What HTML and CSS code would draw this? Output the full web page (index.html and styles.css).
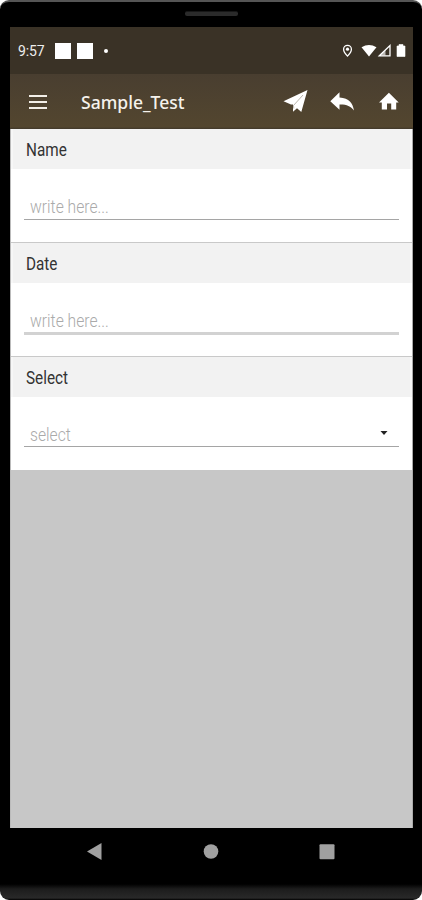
FILE: index.html
```html
<!DOCTYPE html>
<html lang="en">
<head>
<meta charset="utf-8">
<title>Sample_Test</title>
<link rel="stylesheet" href="styles.css">
</head>
<body>
<div class="phone">
  <div class="speaker"></div>
  <main class="screen">
    <header class="header">
      <div class="status">
        <span class="clock">9:57</span>
        <i class="note"></i><i class="note"></i><i class="dot"></i>
        <svg class="signals" width="66" height="16" viewBox="0 0 66 16">
          <path d="M5.500 2.300a3.900 3.900 0 0 0-3.900 3.900c0 2.900 3.900 6.900 3.900 6.900s3.900-4 3.900-6.900a3.900 3.900 0 0 0-3.900-3.900z" fill="none" stroke="#fff" stroke-width="1.300"/>
          <circle cx="5.500" cy="6.200" r="1.600" fill="#fff"/>
          <path d="M19.500 4.300Q27 -.2 34.500 4.300L27 13.500z" fill="#fff"/>
          <path d="M37.300 12.800L48 2.500V12.800z" fill="none" stroke="#fff" stroke-width="1.300"/>
          <path d="M43.500 7V12.500h-6z" fill="#fff" opacity=".65"/>
          <path d="M55 3h2V1.500h4V3h2V13.500h-8z" fill="#fff" stroke="#fff" stroke-width=".6" stroke-linejoin="round"/>
        </svg>
      </div>
      <div class="toolbar">
        <div class="menu"><i></i><i></i><i></i></div>
        <h1><span class="title">Sample_Test</span></h1>
        <svg class="actions" width="118" height="26" viewBox="0 0 118 26" fill="#fff">
          <path d="M24.500 1L.5 12.300l7.500 3.200 2 0V22.800l4-3.600 4.300 3.800z"/>
          <path d="M20 6L10.500 16.500l.3 3" fill="none" stroke="#8a8173" stroke-width=".6"/>
          <path d="M47.300 12.200L56.500 3.300v5.200C66.500 9.300 69.500 13.800 71 21.600c-3.500-4.500-7.500-6.200-14.500-6v5.200z"/>
          <path d="M96 13.500l9.900-9.700 9.800 9.700h-2.500V20.500h-5V14.500H104v6h-5.200v-7z"/>
        </svg>
      </div>
    </header>
    <section class="group">
      <h2><span>Name</span></h2>
      <div class="field"><span class="hint">write here...</span></div>
    </section>
    <section class="group">
      <h2><span>Date</span></h2>
      <div class="field wide"><span class="hint">write here...</span></div>
    </section>
    <section class="group">
      <h2><span>Select</span></h2>
      <div class="field select"><span class="hint">select</span>
        <svg class="caret" width="8" height="6" viewBox="0 0 8 6"><path d="M.5 1h7L4 5z"/></svg>
      </div>
    </section>
  </main>
  <nav class="nav">
    <svg width="250" height="20" viewBox="0 0 250 20" fill="#a0a0a0">
      <path d="M1 10.500L15.500 2v17z"/>
      <circle cx="125" cy="10.500" r="7.300"/>
      <rect x="233.500" y="3.300" width="15" height="15" rx="1"/>
    </svg>
  </nav>
</div>
</body>
</html>
```

FILE: styles.css
```css
* { box-sizing: border-box; }
body { margin: 0; background: #fff; font-family: Roboto, sans-serif; }
.phone {
  height: 900px;
  padding: 0 9px 0 10px;
  border-top: 2px solid #555;
  border-radius: 9px;
  overflow: hidden;
  background: linear-gradient(#000 0, #000 882px, #1c1c1c 887px, #292929 896px, #000 898px);
}
.speaker {
  width: 53px;
  height: 5px;
  margin: 9px auto 11px;
  background: #2b2b2b;
  border-top: 1px solid #171717;
  border-radius: 2px;
}
.screen {
  height: 801px;
  background: #c7c7c7;
  border-left: 1px solid #bbb;
  border-right: 1px solid #aaa;
}
.header { height: 102px; margin: 0 -1px; color: #fff; }
.status {
  height: 47px;
  display: flex;
  align-items: center;
  padding: 0 5px 0 8px;
  background: #3a3226;
}
.clock { width: 36px; font-size: 14px; letter-spacing: -.1px; color: #eee; }
.note { width: 16px; height: 16px; margin-right: 6px; background: #fff; }
.clock + .note { margin-left: 1px; }
.dot { width: 4px; height: 4px; margin-left: 5px; border-radius: 50%; background: #fff; }
.signals { margin-left: auto; }
.toolbar {
  height: 55px;
  display: flex;
  align-items: center;
  padding: 0 12px 0 19px;
  background: linear-gradient(#493e30, #53462f 96%, #40382a);
}
.menu { width: 18px; display: grid; gap: 4px; }
.menu i { height: 2px; background: #f3efe8; }
h1 {
  margin: 0 0 0 34px;
  font: 500 18px/24px "Noto Sans", sans-serif;
  color: #f5f2ec;
}
.title { display: inline-block; transform-origin: left; transform: scaleX(.975); }
.actions { margin-left: auto; }
.group { height: 114px; background: #fff; border-bottom: 1px solid #c9c9c9; }
.group:last-child { height: 113px; border: 0; }
h2 {
  height: 40px;
  margin: 0;
  padding: 0 13px;
  background: #f2f2f2;
  border-left: 2px solid #f7f7f7;
  border-right: 2px solid #f7f7f7;
  font: 400 18px/42px Roboto, sans-serif;
  color: #333;
}
h2 span, .hint { display: inline-block; transform-origin: left; transform: scaleX(.85); }
h2 span { margin-left: -.5px; }
.field {
  height: 51px;
  margin: 0 13px;
  padding: 24px 11px 0 6px;
  display: flex;
  justify-content: space-between;
  align-items: center;
  border-bottom: 1px solid #a5a5a5;
}
.wide { height: 52px; padding-top: 25px; border-bottom: 3px solid #d2d2d2; }
.select { height: 50px; padding-top: 25px; }
.hint { font-size: 18px; font-weight: 300; color: #aaa; transform: scaleX(.87); }
.caret { fill: #222; margin-top: -2px; }
.nav { height: 60px; display: flex; justify-content: center; padding-top: 13px; }
.nav svg { flex: none; margin-right: 1px; }
```
